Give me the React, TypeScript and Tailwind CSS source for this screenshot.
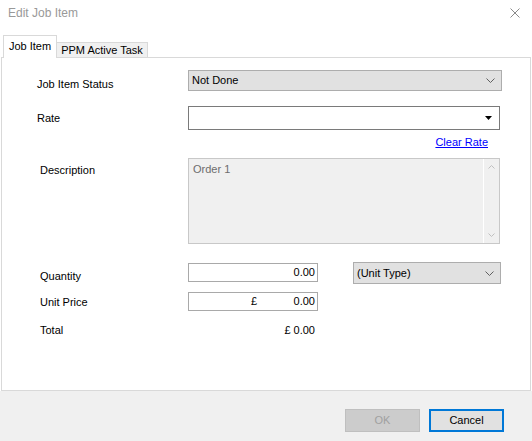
import React from "react"

const FONT = { fontFamily: '"Liberation Sans", Arial, sans-serif' }

function Chevron({ up = false, color = "#606060", w = 9, h = 5 }: { up?: boolean; color?: string; w?: number; h?: number }) {
  return (
    <svg width={w} height={h} viewBox={`0 0 ${w} ${h}`} className="block">
      <polyline
        points={up ? `0.5,${h - 0.5} ${w / 2},0.5 ${w - 0.5},${h - 0.5}` : `0.5,0.5 ${w / 2},${h - 0.5} ${w - 0.5},0.5`}
        fill="none"
        stroke={color}
        strokeWidth="1"
      />
    </svg>
  )
}

function Label({ children, pt, pl = 35 }: { children: React.ReactNode; pt: number; pl?: number }) {
  return (
    <div
      className="w-[186px] shrink-0 text-[11px] leading-[13px] text-black"
      style={{ paddingTop: pt, paddingLeft: pl }}
    >
      {children}
    </div>
  )
}

export default function App() {
  return (
    <div className="w-[532px] h-[441px] flex flex-col bg-white overflow-hidden" style={FONT}>
      {/* Title bar */}
      <div className="h-[24px] shrink-0 flex items-center justify-between pl-[8px] pr-[12px] pt-[1px]">
        <span className="text-[12px] text-[#999999]">Edit Job Item</span>
        <svg width="10" height="10" viewBox="0 0 10 10" className="block">
          <path d="M0.5 0.5 L9.5 9.5 M9.5 0.5 L0.5 9.5" stroke="#8a8a8a" strokeWidth="1" fill="none" />
        </svg>
      </div>

      {/* Tab strip */}
      <div className="mt-[11px] h-[22px] shrink-0 flex items-end pl-[3px] relative z-10">
        <div className="w-[54px] h-[23px] -mb-px bg-white border border-b-0 border-[#d9d9d9] text-[11px] text-black flex items-center justify-center pb-[2px]">
          Job Item
        </div>
        <div className="w-[91px] h-[15px] bg-[#f0f0f0] border border-l-0 border-b-0 border-[#d9d9d9] text-[11px] leading-[13px] text-black flex items-center justify-center">
          PPM Active Task
        </div>
      </div>

      {/* Tab panel */}
      <div className="mx-[1px] h-[334px] shrink-0 border border-[#d9d9d9] bg-white flex flex-col">
        {/* Job Item Status */}
        <div className="flex mt-[12px]">
          <Label pt={8}>Job Item Status</Label>
          <div className="w-[314px] h-[21px] bg-[#e1e1e1] border border-[#adadad] flex items-center justify-between pl-[3px] pr-[6px]">
            <span className="text-[11px] text-black">Not Done</span>
            <Chevron />
          </div>
        </div>

        {/* Rate */}
        <div className="flex mt-[15px]">
          <Label pt={6}>Rate</Label>
          <div className="w-[312px] h-[24px] bg-white border border-[#7a7a7a] flex items-center justify-end pr-[7px]">
            <svg width="7" height="4" viewBox="0 0 7 4" className="block">
              <polygon points="0,0 7,0 3.5,4" fill="#000" />
            </svg>
          </div>
        </div>

        {/* Clear Rate */}
        <div className="flex justify-end pr-[42px] mt-[6px]">
          <span className="text-[11px] leading-[13px] text-[#0000ff] underline">Clear Rate</span>
        </div>

        {/* Description */}
        <div className="flex mt-[9px]">
          <Label pt={6} pl={38}>Description</Label>
          <div className="w-[312px] h-[86px] bg-[#f0f0f0] border border-[#c8c8c8] flex">
            <div className="flex-1 pl-[4px] pt-[4px] text-[11px] leading-[13px] text-[#6d6d6d]">Order 1</div>
            <div className="w-[16px] border-l border-[#ffffff] flex flex-col items-center justify-between py-[6px]">
              <Chevron up color="#c0c0c0" w={7} h={4} />
              <Chevron color="#c0c0c0" w={7} h={4} />
            </div>
          </div>
        </div>

        {/* Quantity */}
        <div className="flex h-[19px] mt-[19px]">
          <Label pt={7} pl={38}>Quantity</Label>
          <div className="w-[130px] h-[19px] bg-white border border-[#a9a9a9] flex items-center justify-end pr-[2px] text-[11px] text-black">
            0.00
          </div>
          <div className="ml-[35px] -mt-px w-[148px] h-[22px] bg-[#e1e1e1] border border-[#adadad] flex items-center justify-between pl-[3px] pr-[6px]">
            <span className="text-[11px] text-black">(Unit Type)</span>
            <Chevron />
          </div>
        </div>

        {/* Unit Price */}
        <div className="flex h-[19px] mt-[10px]">
          <Label pt={4} pl={38}>Unit Price</Label>
          <div className="w-[130px] h-[19px] bg-white border border-[#a9a9a9] flex items-center pr-[2px] text-[11px] text-black">
            <span className="ml-[62px]">£</span>
            <span className="ml-auto">0.00</span>
          </div>
        </div>

        {/* Total */}
        <div className="flex mt-[13px]">
          <Label pt={0} pl={38}>Total</Label>
          <div className="w-[130px] flex justify-end pr-[3px] text-[11px] leading-[13px] text-black">£ 0.00</div>
        </div>
      </div>

      {/* Footer */}
      <div className="flex-1 bg-[#f0f0f0] flex justify-end items-start pt-[18px] pr-[28px] gap-[9px]">
        <div className="w-[75px] h-[23px] bg-[#cccccc] border border-[#bfbfbf] flex items-center justify-center text-[11px] text-[#a0a0a0]">
          OK
        </div>
        <div className="w-[75px] h-[23px] bg-[#e1e1e1] border-2 border-[#0078d7] flex items-center justify-center text-[11px] text-black">
          Cancel
        </div>
      </div>
    </div>
  )
}
